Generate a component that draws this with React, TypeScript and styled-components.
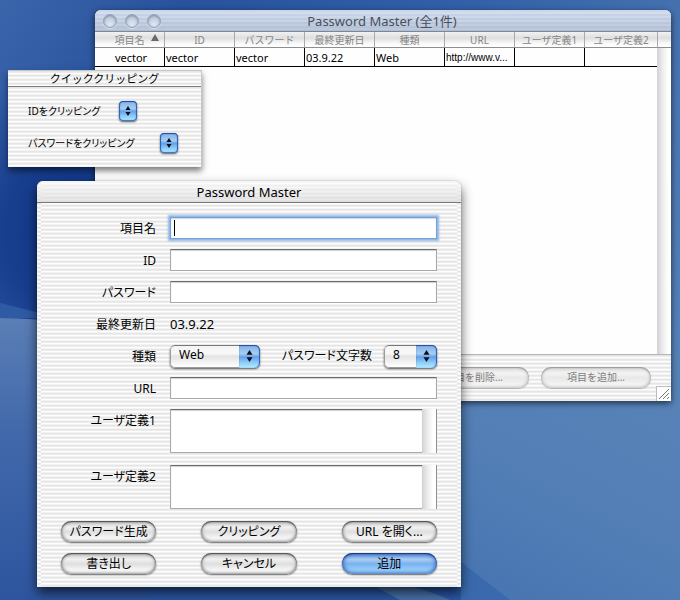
import React from "react";
import styled, { createGlobalStyle, css } from "styled-components";

const GlobalStyle = createGlobalStyle`
  * { box-sizing: border-box; }
  body {
    margin: 0;
    color: #000;
    font-family: "Noto Sans", "Noto Sans CJK JP", sans-serif;
    font-size: 12px;
    line-height: 16px;
  }
  button, input, select, textarea { font: inherit; color: inherit; margin: 0; }
`;

const stripeTile =
  "linear-gradient(#e6e6e6 0 1px, #ececec 1px 2px, #fefefe 2px 3px, #f3f3f3 3px 4px)";

const Desktop = styled.main`
  position: relative;
  min-height: 100vh;
  overflow: hidden;
  background: #3a65a8;
`;

const Wallpaper = styled.svg`
  position: absolute;
  inset: 0;
  width: 100%;
  height: 100%;
`;

/* ---------- list window ---------- */

const ListWindow = styled.section`
  position: absolute;
  top: 10px;
  left: 95px;
  right: 9px;
  bottom: 199px;
  min-width: 576px;
  min-height: 300px;
  display: flex;
  flex-direction: column;
  overflow: hidden;
  border-radius: 6px 6px 0 0;
  background: #fefefe;
  box-shadow: 0 2px 6px rgba(0, 0, 0, 0.65);
`;

const InactiveTitleBar = styled.header`
  display: grid;
  grid-template-columns: 80px 1fr 80px;
  align-items: center;
  height: 22px;
  padding-left: 8px;
  padding-right: 10px;
  border-bottom: 1px solid #7f8794;
  background: linear-gradient(rgba(255, 255, 255, 0.25), rgba(150, 165, 190, 0.35)),
    linear-gradient(#bccbe2 0 2px, #cbd7e9 2px 4px) 0 0 / 4px 4px;
`;

const WindowButtons = styled.div`
  display: flex;
  gap: 8px;
`;

const Orb = styled.button`
  width: 14px;
  height: 14px;
  padding: 0;
  border: 1px solid #95a1b5;
  border-radius: 50%;
  background: radial-gradient(circle at 50% 80%, #dfe8f4, #b9c6da 75%);
  box-shadow: inset 0 1px 2px rgba(70, 85, 110, 0.5), 0 1px 0 rgba(255, 255, 255, 0.5);
`;

const Title = styled.h1<{ $muted?: boolean }>`
  margin: 0;
  text-align: center;
  white-space: nowrap;
  font-size: 13px;
  line-height: 20px;
  font-weight: 400;
  color: ${(p) => (p.$muted ? "#474f5e" : "#000")};
`;

const ListBody = styled.div`
  flex: 1;
  min-height: 0;
  display: grid;
  grid-template-columns: 1fr 14px;
  border-bottom: 1px solid #b4b4b4;
`;

const headFill = "linear-gradient(#f2f2f2, #dedede 40%, #f8f8f8 75%, #fff)";

const Table = styled.table`
  width: 100%;
  table-layout: fixed;
  border-collapse: separate;
  border-spacing: 0;
  align-self: start;
`;

const HeadCell = styled.th`
  position: relative;
  height: 16px;
  padding: 0;
  border-bottom: 1px solid #8e8e8e;
  background: ${headFill};
  color: #858585;
  font-size: 10px;
  line-height: 14px;
  font-weight: 400;
  text-align: center;
  white-space: nowrap;
  & + & { border-left: 1px solid #aaa; }
`;

const SortMark = styled.svg`
  position: absolute;
  right: 5px;
  top: 2px;
`;

const Cell = styled.td<{ $compact?: boolean }>`
  height: 19px;
  padding: 2px 1px 0;
  border-bottom: 1px solid #000;
  font-size: 11px;
  line-height: 16px;
  white-space: nowrap;
  overflow: hidden;
  &:first-child { text-align: center; padding-left: 4px; }
  & + & { border-left: 1px solid #000; }
  ${(p) =>
    p.$compact &&
    css`
      font-family: "Liberation Sans", sans-serif;
      font-size: 10px;
    `}
`;

const Track = styled.div`
  background: linear-gradient(90deg, #d2d2d2, #ececec 40%, #fff 80%);
`;

const TrackHead = styled.div`
  height: 16px;
  border-bottom: 1px solid #8e8e8e;
  border-left: 1px solid #aaa;
  background: ${headFill};
`;

const ListFooter = styled.footer`
  display: flex;
  justify-content: flex-end;
  gap: 12px;
  height: 46px;
  padding: 12px 20px 0;
  background: ${stripeTile} 0 0 / 4px 4px;
`;

const ResizeGrip = styled.svg`
  position: absolute;
  right: 0;
  bottom: 0;
  background: #fdfdfd;
  border: 1px solid #bdbdbd;
  border-width: 1px 0 0 1px;
`;

/* ---------- shared controls ---------- */

const AquaButton = styled.button<{ $primary?: boolean }>`
  height: 21px;
  padding: 0;
  border: 0;
  border-radius: 11px;
  font-size: 12px;
  line-height: 21px;
  font-feature-settings: "palt";
  white-space: nowrap;
  background: linear-gradient(#c4c4c4, #f1f1f1 30%, #dedede 52%, #f2f2f2 75%, #fff);
  box-shadow: inset 0 1px 1px #4f4f4f, inset 0 0 3px 1px #8c8c8c, 0 1px 2px rgba(0, 0, 0, 0.6);
  ${(p) =>
    p.$primary &&
    css`
      background: linear-gradient(#5c90d4, #a9cdf3 30%, #78b1ee 52%, #99cefb 80%, #a9dcff);
      box-shadow: inset 0 1px 1px #14358c, inset 0 0 4px 1px #2a5db4,
        0 1px 2px rgba(0, 0, 0, 0.6);
    `}
`;

const FooterButton = styled(AquaButton)`
  width: 110px;
  font-size: 10px;
  font-feature-settings: normal;
  color: #7d7d7d;
  background: linear-gradient(#dcdcdc, #f3f3f3 30%, #e8e8e8 52%, #fafafa);
  box-shadow: inset 0 1px 1px #9a9a9a, inset 0 0 3px 1px #bcbcbc, 0 1px 1px rgba(0, 0, 0, 0.25);
`;

const PopupBox = styled.span<{ $width: number; $small?: boolean }>`
  position: relative;
  display: flex;
  width: ${(p) => p.$width}px;
  height: ${(p) => (p.$small ? 20 : 23)}px;
  border-radius: ${(p) => (p.$small ? 4 : 5)}px;
  overflow: hidden;
  box-shadow: 0 1px 2px rgba(0, 0, 0, 0.65);
`;

const PopupSelect = styled.select<{ $bare?: boolean }>`
  appearance: none;
  width: 100%;
  height: 100%;
  padding: 0 0 2px ${(p) => (p.$bare ? 0 : 8)}px;
  border: 1px solid #9b9b9b;
  border-top-color: #777;
  border-radius: inherit;
  line-height: 16px;
  background: linear-gradient(#f4f4f4, #f8f8f8 35%, #e4e4e4 50%, #fff);
`;

const PopupArrows = styled.span<{ $small?: boolean }>`
  position: absolute;
  top: 0;
  right: 0;
  bottom: 0;
  width: ${(p) => (p.$small ? 18 : 21)}px;
  display: grid;
  place-items: center;
  pointer-events: none;
  border-radius: ${(p) => (p.$small ? "4px" : "0 5px 5px 0")};
  background: linear-gradient(#7fb0e6, #a8cdf2 38%, #62a2e8 52%, #8ccafa 75%, #b4ecff);
  box-shadow: inset 0 1px 1px #1b4aa5, inset -1px 0 1px #2a62bb
    ${(p) => (p.$small ? ", inset 1px 0 1px #2a62bb, inset 0 -1px 1px #3d78c4" : "")};
`;

function Popup(props: { id: string; width: number; value: string; small?: boolean }) {
  return (
    <PopupBox $width={props.width} $small={props.small}>
      <PopupSelect id={props.id} $bare={props.small} defaultValue={props.value}>
        <option value={props.value}>{props.value}</option>
      </PopupSelect>
      <PopupArrows $small={props.small}>
        <svg
          width={props.small ? 6 : 7}
          height={props.small ? 10 : 12}
          viewBox="0 0 7 12"
          preserveAspectRatio="none"
          aria-hidden="true"
        >
          <path d="M3.5 0 6.5 4.8H.5zM3.5 12 6.5 7.2H.5z" fill="#0a1020" />
        </svg>
      </PopupArrows>
    </PopupBox>
  );
}

/* ---------- clipping palette ---------- */

const Palette = styled.section`
  position: absolute;
  top: 70px;
  left: 8px;
  min-width: 194px;
  border: 1px solid #c6c6c6;
  border-width: 1px 1px 0 0;
  background: ${stripeTile} 0 0 / 4px 4px;
  box-shadow: 0 4px 6px rgba(0, 0, 0, 0.5);
`;

const PaletteTitle = styled.h2`
  margin: 0;
  height: 16px;
  border-bottom: 1px solid #7c7c7c;
  font-size: 11px;
  line-height: 15px;
  font-weight: 400;
  text-align: center;
`;

const PaletteBody = styled.div`
  display: grid;
  gap: 12px;
  padding: 14px 20px;
`;

const PaletteRow = styled.div<{ $label: number }>`
  display: grid;
  grid-template-columns: ${(p) => p.$label}px auto;
  justify-content: start;
  align-items: center;
`;

const PaletteLabel = styled.label`
  font-size: 10px;
  font-feature-settings: "palt";
  white-space: nowrap;
`;

/* ---------- edit dialog ---------- */

const Dialog = styled.section`
  position: absolute;
  top: 181px;
  left: 37px;
  right: 219px;
  min-width: 424px;
  border-radius: 6px 6px 0 0;
  background: ${stripeTile} 0 2px / 4px 4px repeat-y,
    ${stripeTile} 100% 2px / 4px 4px repeat-y, ${stripeTile} 0 0 / 4px 4px;
  box-shadow: 0 6px 12px rgba(0, 0, 0, 0.65), 0 0 1px rgba(0, 0, 0, 0.6);
`;

const DialogTitleBar = styled.header`
  height: 22px;
  padding-top: 1px;
  border-bottom: 1px solid #777;
  border-radius: 6px 6px 0 0;
  background: linear-gradient(rgba(255, 255, 255, 0.6), rgba(215, 215, 215, 0.6));
`;

const Form = styled.form`
  padding: 14px 24px 13px;
`;

const Fields = styled.div`
  display: grid;
  grid-template-columns: 95px 1fr;
  column-gap: 14px;
  row-gap: 10px;
  align-items: start;
`;

const FieldLabel = styled.label`
  height: 22px;
  font-size: 12px;
  line-height: 24px;
  text-align: right;
  font-feature-settings: "palt";
  white-space: nowrap;
`;

const InlineLabel = styled(FieldLabel)`
  line-height: 22px;
  margin-left: auto;
  margin-right: 12px;
`;

const TextField = styled.input<{ $active?: boolean }>`
  display: block;
  width: 100%;
  height: 22px;
  padding: 0 4px;
  border: 1px solid #a9a9a9;
  border-top-color: #6b6b6b;
  border-radius: 0;
  outline: none;
  background: #fff;
  box-shadow: inset 0 1px 1px #d0d0d0;
  ${(p) =>
    p.$active &&
    css`
      border-color: #74a3dc;
      background: linear-gradient(#000, #000) 3px 2px / 1px 16px no-repeat #fff;
      box-shadow: 0 0 2px 2px #8fb6e4, inset 0 1px 1px #c9d6e8;
    `}
`;

const DateOutput = styled.output`
  font-size: 13px;
  line-height: 22px;
`;

const PopupLine = styled.div`
  display: flex;
  align-items: center;
  height: 22px;
`;

const NoteBox = styled.div`
  display: grid;
  grid-template-columns: 1fr 15px;
  height: 46px;
  padding-bottom: 2px;
`;

const NoteArea = styled.textarea`
  width: 100%;
  height: 44px;
  padding: 2px 4px;
  resize: none;
  overflow: hidden;
  outline: none;
  border: 1px solid #a9a9a9;
  border-top-color: #6b6b6b;
  border-right: 0;
  border-radius: 0;
  background: #fff;
  box-shadow: inset 0 1px 1px #d0d0d0;
`;

const NoteTrack = styled(Track)`
  border-right: 1px solid #8e8e8e;
`;

const Actions = styled.div`
  display: grid;
  grid-template-columns: repeat(3, 1fr);
  gap: 11px 45px;
  margin-top: 10px;
`;

const columns = ["項目名", "ID", "パスワード", "最終更新日", "種類", "URL", "ユーザ定義1", "ユーザ定義2"];
const record = ["vector", "vector", "vector", "03.9.22", "Web", "http://www.v...", "", ""];

function WallpaperArt() {
  return (
    <Wallpaper viewBox="0 0 680 600" preserveAspectRatio="none" aria-hidden="true">
      <defs>
        <linearGradient id="sky" x1="0" x2="1" y1="0" y2="0.6">
          <stop offset="0" stopColor="#3b65ab" />
          <stop offset="0.2" stopColor="#28529c" />
          <stop offset="0.5" stopColor="#3160a8" />
          <stop offset="0.74" stopColor="#4571af" />
          <stop offset="1" stopColor="#5682b8" />
        </linearGradient>
        <radialGradient id="deep">
          <stop offset="0" stopColor="#0f3588" />
          <stop offset="0.5" stopColor="#143a8a" stopOpacity="0.85" />
          <stop offset="1" stopColor="#1d4493" stopOpacity="0" />
        </radialGradient>
        <linearGradient id="left" x1="0" x2="0" y1="0" y2="1">
          <stop offset="0" stopColor="#5a7eb5" />
          <stop offset="0.4" stopColor="#4269ab" />
          <stop offset="1" stopColor="#2d559f" />
        </linearGradient>
        <linearGradient id="right" x1="0" x2="0.6" y1="1" y2="0">
          <stop offset="0" stopColor="#4472b0" />
          <stop offset="0.6" stopColor="#537fb6" />
          <stop offset="1" stopColor="#5682b8" />
        </linearGradient>
      </defs>
      <rect width="680" height="600" fill="url(#sky)" />
      <ellipse cx="80" cy="230" rx="150" ry="170" fill="url(#deep)" />
      <path d="M0 303 Q20 308 60 318 H0z" fill="#2f5ba4" />
      <path d="M0 318 Q150 318 260 420 T480 600 H0z" fill="url(#left)" />
      <path d="M400 360 H680 V600 H400z" fill="url(#right)" />
      <path d="M150 560 H440 L500 600 H150z" fill="#2a57a5" />
      <path d="M360 578 Q410 582 450 600 H400z" fill="#4773ad" />
      <path d="M461 562 L510 600 H461z" fill="#3a69ad" />
    </Wallpaper>
  );
}

export default function App() {
  return (
    <Desktop>
      <GlobalStyle />
      <WallpaperArt />

      <ListWindow>
        <InactiveTitleBar>
          <WindowButtons>
            <Orb type="button" aria-label="閉じる" />
            <Orb type="button" aria-label="しまう" />
            <Orb type="button" aria-label="拡大" />
          </WindowButtons>
          <Title $muted>Password Master (全1件)</Title>
        </InactiveTitleBar>
        <ListBody>
          <Table>
            <colgroup>
              <col width="69" />
              {columns.slice(1, -1).map((c) => (
                <col key={c} width="70" />
              ))}
              <col />
            </colgroup>
            <thead>
              <tr>
                {columns.map((c, i) => (
                  <HeadCell key={c} scope="col">
                    {c}
                    {i === 0 && (
                      <SortMark width="8" height="7" viewBox="0 0 8 7" aria-hidden="true">
                        <path d="M4 0 8 7H0z" fill="#6a6a6a" />
                      </SortMark>
                    )}
                  </HeadCell>
                ))}
              </tr>
            </thead>
            <tbody>
              <tr>
                {record.map((v, i) => (
                  <Cell key={i} $compact={columns[i] === "URL"}>
                    {v}
                  </Cell>
                ))}
              </tr>
            </tbody>
          </Table>
          <Track>
            <TrackHead />
          </Track>
        </ListBody>
        <ListFooter>
          <FooterButton type="button">項目を削除...</FooterButton>
          <FooterButton type="button">項目を追加...</FooterButton>
        </ListFooter>
        <ResizeGrip width="15" height="15" viewBox="0 0 14 14" aria-hidden="true">
          <path d="M2 12 12 2M6 12l6-6M10 12l2-2" stroke="#777" strokeWidth="1" />
        </ResizeGrip>
      </ListWindow>

      <Palette>
        <PaletteTitle>クイッククリッピング</PaletteTitle>
        <PaletteBody>
          <PaletteRow $label={91}>
            <PaletteLabel htmlFor="clip-id">IDをクリッピング</PaletteLabel>
            <Popup id="clip-id" width={18} value="" small />
          </PaletteRow>
          <PaletteRow $label={132}>
            <PaletteLabel htmlFor="clip-password">パスワードをクリッピング</PaletteLabel>
            <Popup id="clip-password" width={18} value="" small />
          </PaletteRow>
        </PaletteBody>
      </Palette>

      <Dialog role="dialog" aria-labelledby="dialog-title">
        <DialogTitleBar>
          <Title as="h2" id="dialog-title">
            Password Master
          </Title>
        </DialogTitleBar>
        <Form onSubmit={(e) => e.preventDefault()}>
          <Fields>
            <FieldLabel htmlFor="name">項目名</FieldLabel>
            <TextField id="name" type="text" $active />
            <FieldLabel htmlFor="user-id">ID</FieldLabel>
            <TextField id="user-id" type="text" />
            <FieldLabel htmlFor="password">パスワード</FieldLabel>
            <TextField id="password" type="text" />
            <FieldLabel htmlFor="updated">最終更新日</FieldLabel>
            <DateOutput id="updated">03.9.22</DateOutput>
            <FieldLabel htmlFor="kind">種類</FieldLabel>
            <PopupLine>
              <Popup id="kind" width={90} value="Web" />
              <InlineLabel htmlFor="length">パスワード文字数</InlineLabel>
              <Popup id="length" width={53} value="8" />
            </PopupLine>
            <FieldLabel htmlFor="url">URL</FieldLabel>
            <TextField id="url" type="text" />
            <FieldLabel htmlFor="user1">ユーザ定義1</FieldLabel>
            <NoteBox>
              <NoteArea id="user1" />
              <NoteTrack />
            </NoteBox>
            <FieldLabel htmlFor="user2">ユーザ定義2</FieldLabel>
            <NoteBox>
              <NoteArea id="user2" />
              <NoteTrack />
            </NoteBox>
          </Fields>
          <Actions>
            <AquaButton type="button">パスワード生成</AquaButton>
            <AquaButton type="button">クリッピング</AquaButton>
            <AquaButton type="button">URL を開く...</AquaButton>
            <AquaButton type="button">書き出し</AquaButton>
            <AquaButton type="button">キャンセル</AquaButton>
            <AquaButton type="submit" $primary>
              追加
            </AquaButton>
          </Actions>
        </Form>
      </Dialog>
    </Desktop>
  );
}
